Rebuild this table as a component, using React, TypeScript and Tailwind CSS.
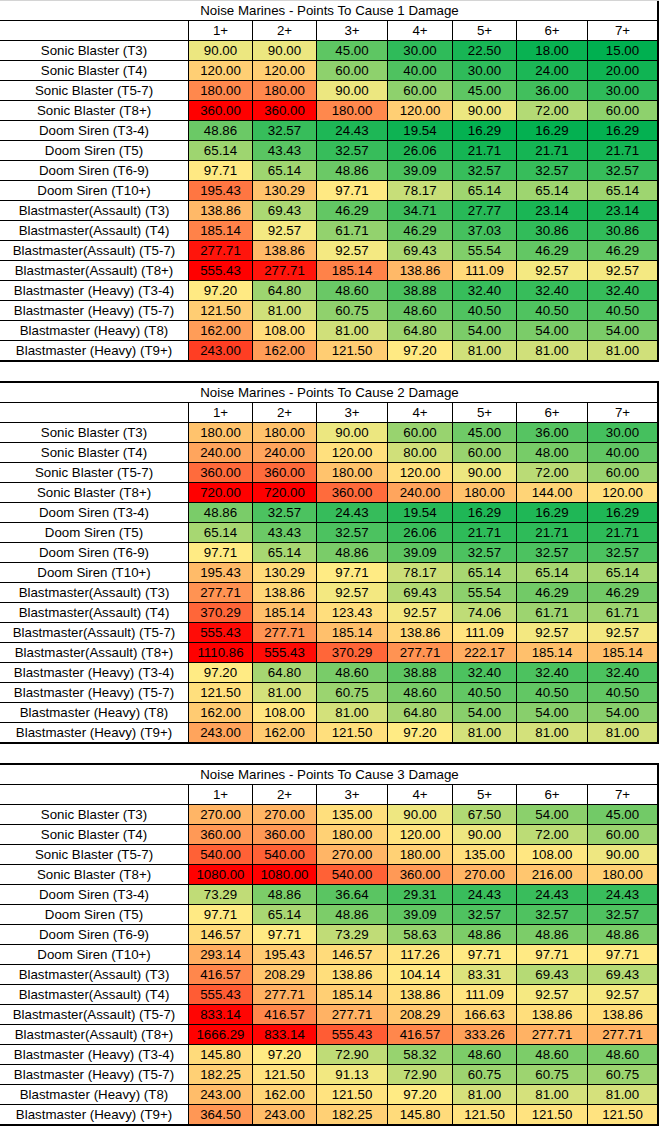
type Row = { label: string; values: number[] };
type Scale = { lo: number; mid: number; hi: number };

const labels = [
  "Sonic Blaster (T3)",
  "Sonic Blaster (T4)",
  "Sonic Blaster (T5-7)",
  "Sonic Blaster (T8+)",
  "Doom Siren (T3-4)",
  "Doom Siren (T5)",
  "Doom Siren (T6-9)",
  "Doom Siren (T10+)",
  "Blastmaster(Assault) (T3)",
  "Blastmaster(Assault) (T4)",
  "Blastmaster(Assault) (T5-7)",
  "Blastmaster(Assault) (T8+)",
  "Blastmaster (Heavy) (T3-4)",
  "Blastmaster (Heavy) (T5-7)",
  "Blastmaster (Heavy) (T8)",
  "Blastmaster (Heavy) (T9+)",
];

const oneDamage = [
  [90, 90, 45, 30, 22.5, 18, 15],
  [120, 120, 60, 40, 30, 24, 20],
  [180, 180, 90, 60, 45, 36, 30],
  [360, 360, 180, 120, 90, 72, 60],
  [48.86, 32.57, 24.43, 19.54, 16.29, 16.29, 16.29],
  [65.14, 43.43, 32.57, 26.06, 21.71, 21.71, 21.71],
  [97.71, 65.14, 48.86, 39.09, 32.57, 32.57, 32.57],
  [195.43, 130.29, 97.71, 78.17, 65.14, 65.14, 65.14],
  [138.86, 69.43, 46.29, 34.71, 27.77, 23.14, 23.14],
  [185.14, 92.57, 61.71, 46.29, 37.03, 30.86, 30.86],
  [277.71, 138.86, 92.57, 69.43, 55.54, 46.29, 46.29],
  [555.43, 277.71, 185.14, 138.86, 111.09, 92.57, 92.57],
  [97.2, 64.8, 48.6, 38.88, 32.4, 32.4, 32.4],
  [121.5, 81, 60.75, 48.6, 40.5, 40.5, 40.5],
  [162, 108, 81, 64.8, 54, 54, 54],
  [243, 162, 121.5, 97.2, 81, 81, 81],
];

const twoDamage = [
  [180, 180, 90, 60, 45, 36, 30],
  [240, 240, 120, 80, 60, 48, 40],
  [360, 360, 180, 120, 90, 72, 60],
  [720, 720, 360, 240, 180, 144, 120],
  [48.86, 32.57, 24.43, 19.54, 16.29, 16.29, 16.29],
  [65.14, 43.43, 32.57, 26.06, 21.71, 21.71, 21.71],
  [97.71, 65.14, 48.86, 39.09, 32.57, 32.57, 32.57],
  [195.43, 130.29, 97.71, 78.17, 65.14, 65.14, 65.14],
  [277.71, 138.86, 92.57, 69.43, 55.54, 46.29, 46.29],
  [370.29, 185.14, 123.43, 92.57, 74.06, 61.71, 61.71],
  [555.43, 277.71, 185.14, 138.86, 111.09, 92.57, 92.57],
  [1110.86, 555.43, 370.29, 277.71, 222.17, 185.14, 185.14],
  [97.2, 64.8, 48.6, 38.88, 32.4, 32.4, 32.4],
  [121.5, 81, 60.75, 48.6, 40.5, 40.5, 40.5],
  [162, 108, 81, 64.8, 54, 54, 54],
  [243, 162, 121.5, 97.2, 81, 81, 81],
];

const threeDamage = [
  [270, 270, 135, 90, 67.5, 54, 45],
  [360, 360, 180, 120, 90, 72, 60],
  [540, 540, 270, 180, 135, 108, 90],
  [1080, 1080, 540, 360, 270, 216, 180],
  [73.29, 48.86, 36.64, 29.31, 24.43, 24.43, 24.43],
  [97.71, 65.14, 48.86, 39.09, 32.57, 32.57, 32.57],
  [146.57, 97.71, 73.29, 58.63, 48.86, 48.86, 48.86],
  [293.14, 195.43, 146.57, 117.26, 97.71, 97.71, 97.71],
  [416.57, 208.29, 138.86, 104.14, 83.31, 69.43, 69.43],
  [555.43, 277.71, 185.14, 138.86, 111.09, 92.57, 92.57],
  [833.14, 416.57, 277.71, 208.29, 166.63, 138.86, 138.86],
  [1666.29, 833.14, 555.43, 416.57, 333.26, 277.71, 277.71],
  [145.8, 97.2, 72.9, 58.32, 48.6, 48.6, 48.6],
  [182.25, 121.5, 91.13, 72.9, 60.75, 60.75, 60.75],
  [243, 162, 121.5, 97.2, 81, 81, 81],
  [364.5, 243, 182.25, 145.8, 121.5, 121.5, 121.5],
];

const headers = ["1+", "2+", "3+", "4+", "5+", "6+", "7+"];

const GREEN = [0, 176, 80];
const YELLOW = [255, 235, 132];
const RED = [255, 0, 0];

function mix(a: number[], b: number[], t: number) {
  const k = Math.min(1, Math.max(0, t));
  const c = a.map((v, i) => Math.round(v + (b[i] - v) * k));
  return `rgb(${c[0]}, ${c[1]}, ${c[2]})`;
}

// three colour scale, green -> yellow -> red
function cellColour(v: number, s: Scale) {
  if (v <= s.mid) return mix(GREEN, YELLOW, (v - s.lo) / (s.mid - s.lo));
  return mix(YELLOW, RED, (v - s.mid) / (s.hi - s.mid));
}

function toRows(data: number[][]): Row[] {
  return data.map((values, i) => ({ label: labels[i], values }));
}

const cols = "grid grid-cols-[189px_64px_64px_71px_65px_64px_71px_71px]";

function DamageTable({
  damage,
  rows,
  scale,
  first,
}: {
  damage: number;
  rows: Row[];
  scale: Scale;
  first?: boolean;
}) {
  return (
    <div
      className={`w-[659px] ${first ? "border-t border-[#d4d4d4]" : "border-t-2 border-black"}`}
    >
      <div className="flex h-[20px] items-center justify-center border-b border-r-2 border-black pt-px pl-[2px]">
        Noise Marines - Points To Cause {damage} Damage
      </div>
      <div className={cols}>
        <div className="h-[20px] border-b border-r border-black" />
        {headers.map((h, i) => (
          <div
            key={h}
            className={`flex h-[20px] items-center justify-center border-b border-black pt-px ${
              i === 6 ? "border-r-2" : "border-r"
            }`}
          >
            {h}
          </div>
        ))}
        {rows.map((row, r) => {
          const last = r === rows.length - 1;
          return [
            <div
              key={`${row.label}-l`}
              className={`flex items-center justify-center border-r border-black pt-px ${
                last ? "h-[21px] border-b-2" : "h-[20px] border-b"
              }`}
            >
              {row.label}
            </div>,
            ...row.values.map((v, c) => (
              <div
                key={`${row.label}-${c}`}
                className={`flex items-center justify-center border-black pt-px ${
                  c === 6 ? "border-r-2" : "border-r"
                } ${last ? "h-[21px] border-b-2" : "h-[20px] border-b"}`}
                style={{ backgroundColor: cellColour(v, scale) }}
              >
                {v.toFixed(2)}
              </div>
            )),
          ];
        })}
      </div>
    </div>
  );
}

export default function App() {
  return (
    <div className="h-[1126px] w-[661px] overflow-hidden bg-white font-['Liberation_Sans',Arial,sans-serif] text-[13.3px] leading-none text-black">
      <DamageTable damage={1} rows={toRows(oneDamage)} scale={{ lo: 15, mid: 96, hi: 296 }} first />
      <div className="h-[19px]" />
      <DamageTable damage={2} rows={toRows(twoDamage)} scale={{ lo: 5, mid: 97, hi: 580 }} />
      <div className="h-[19px]" />
      <DamageTable damage={3} rows={toRows(threeDamage)} scale={{ lo: 4, mid: 96, hi: 850 }} />
    </div>
  );
}
